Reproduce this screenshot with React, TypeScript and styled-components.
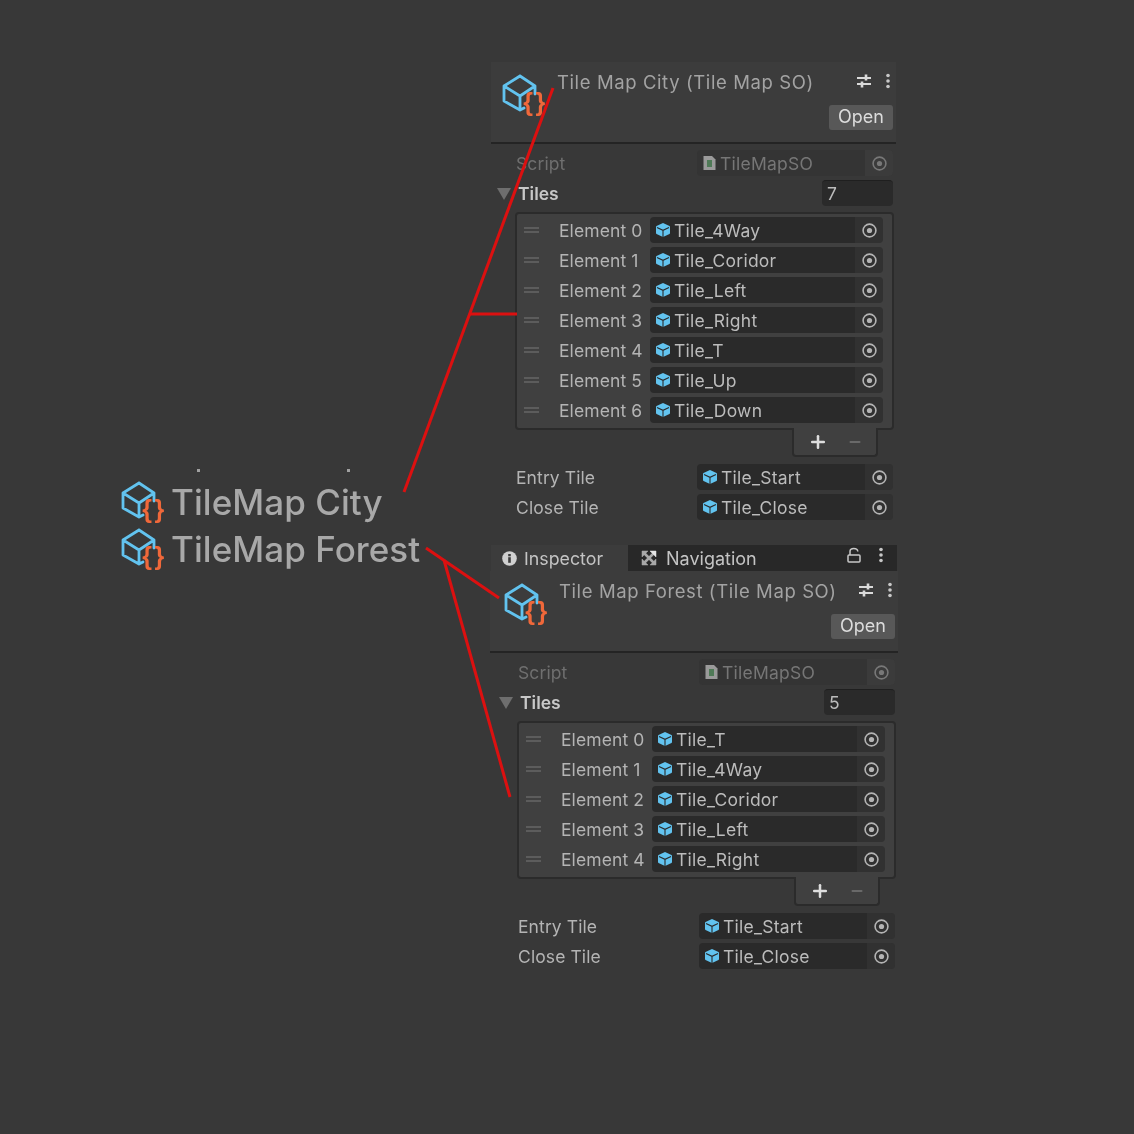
import React from 'react';
import styled, { createGlobalStyle } from 'styled-components';
import { Minus, Plus } from 'lucide-react';

const GlobalStyle = createGlobalStyle`
  html, body {
    margin: 0;
    padding: 0;
    background: #383838;
  }
  * {
    box-sizing: border-box;
  }
`;

function AssetIcon({ size = 46 }: { size?: number }) {
  return (
    <svg width={size} height={size} viewBox="0 0 46 46" fill="none">
      <path d="M19 4 L34 14 V22 M34 14 L19 24 L3 14 L19 4 M3 14 V29 L19 38 V24 M19 38 L23 36" stroke="#62c3ef" strokeWidth="2.8" strokeLinejoin="round" strokeLinecap="round" />
      <text x="34.5" y="39" textAnchor="middle" fontFamily="Liberation Sans, sans-serif" fontWeight="700" fontSize="25" fill="#f0683a" letterSpacing="2.5">{'{}'}</text>
    </svg>
  );
}

function PrefabIcon() {
  return (
    <svg width="16" height="16" viewBox="0 0 16 16">
      <path d="M8 1 L14.5 4 Q15 4.3 15 5 V11 Q15 11.7 14.5 12 L8 15 L1.5 12 Q1 11.7 1 11 V5 Q1 4.3 1.5 4 Z" fill="#62c3ef" />
      <path d="M2 5.5 L8 8.3 L14 5.5 M8 8.3 V15" stroke="#2a2a2a" strokeWidth="1.1" fill="none" />
    </svg>
  );
}

function ScriptIcon() {
  return (
    <svg width="15" height="16" viewBox="0 0 15 16">
      <path d="M1.5 1 H10 L13.5 4.5 V15 H1.5 Z" fill="#9a9a9a" />
      <rect x="5" y="5" width="5" height="7" fill="#4f7a57" />
    </svg>
  );
}

function TargetIcon({ dim }: { dim?: boolean }) {
  const c = dim ? '#787878' : '#b4b4b4';
  return (
    <svg width="17" height="17" viewBox="0 0 17 17" fill="none">
      <circle cx="8.5" cy="8.5" r="6.4" stroke={c} strokeWidth="1.6" />
      <circle cx="8.5" cy="8.5" r="2.6" fill={c} />
    </svg>
  );
}

function SlidersIcon() {
  return (
    <svg width="16" height="16" viewBox="0 0 16 16" fill="none" stroke="#dadada" strokeWidth="1.8">
      <path d="M1 5 H15 M1 11 H15" />
      <path d="M10 1.5 V7.5 M6 8.5 V14.5" strokeWidth="2.6" />
    </svg>
  );
}

function KebabIcon() {
  return (
    <svg width="6" height="16" viewBox="0 0 6 16" fill="#c8c8c8">
      <circle cx="3" cy="2.5" r="1.8" />
      <circle cx="3" cy="8" r="1.8" />
      <circle cx="3" cy="13.5" r="1.8" />
    </svg>
  );
}

function InfoIcon() {
  return (
    <svg width="15" height="15" viewBox="0 0 15 15">
      <circle cx="7.5" cy="7.5" r="7.3" fill="#d0d0d0" />
      <rect x="6.2" y="6.2" width="2.6" height="5.6" fill="#3c3c3c" />
      <rect x="6.2" y="3" width="2.6" height="2.3" fill="#3c3c3c" />
    </svg>
  );
}

function NavIcon() {
  return (
    <svg width="16" height="16" viewBox="0 0 16 16" fill="none" stroke="#a8a8a8">
      <path d="M2 2 L14 14 M14 2 L2 14" strokeWidth="2.6" />
      <path d="M1 1 H7 L1 7 Z M1 15 H7 L1 9 Z M15 15 H9 L15 9 Z" fill="#a8a8a8" strokeWidth="0.5" />
      <path d="M15 1 H9 L15 7 Z" fill="#e4e4e4" stroke="#e4e4e4" strokeWidth="0.5" />
    </svg>
  );
}

function LockIcon() {
  return (
    <svg width="14" height="16" viewBox="0 0 14 16" fill="none" stroke="#c8c8c8" strokeWidth="1.5">
      <rect x="1" y="8" width="12" height="7" rx="1" />
      <path d="M3 8 V4.5 C3 0.5 10.5 0.5 10.8 4.5" />
    </svg>
  );
}

const Page = styled.div`
  position: relative;
  width: 1134px;
  height: 1134px;
  display: grid;
  grid-template-columns: 491px 1fr;
  background: #383838;
  font-family: Inter, 'Liberation Sans', sans-serif;
  filter: blur(0.7px);
  overflow: hidden;
`;

const AssetColumn = styled.div`
  padding: 469px 0 0 120px;
  filter: blur(0.7px);
`;

const StrayMarks = styled.div`
  display: flex;
  gap: 147px;
  height: 9px;
  padding-left: 77px;
`;

const StrayMark = styled.span`
  width: 3px;
  height: 3px;
  background: #a0a0a0;
`;

const AssetRow = styled.div`
  display: flex;
  align-items: center;
  height: 47px;
  gap: 5px;
  color: #a8a8a8;
  font-size: 35px;
  font-weight: 500;
  letter-spacing: 0.05px;
`;

const InspectorColumn = styled.div`
  padding-top: 62px;
`;

const Panel = styled.section<{ $shift?: boolean }>`
  width: 405px;
  margin-left: ${(p) => (p.$shift ? '2px' : '0')};
`;

const TabStrip = styled.div`
  display: flex;
  height: 26px;
  width: 406px;
  margin-top: 23px;
`;

const ActiveTab = styled.div`
  width: 137px;
  display: flex;
  align-items: center;
  gap: 7px;
  padding-left: 11px;
  background: #3c3c3c;
  color: #c4c4c4;
  font-size: 17.8px;
`;

const IdleTabs = styled.div`
  flex: 1;
  display: flex;
  align-items: center;
  gap: 9px;
  padding: 0 13px;
  background: #282828;
  color: #c4c4c4;
  font-size: 18px;
`;

const TabActions = styled.div`
  margin-left: auto;
  display: flex;
  align-items: center;
  gap: 17px;
  padding-bottom: 6px;
`;

const Header = styled.header<{ $bleed?: boolean }>`
  position: relative;
  height: 82px;
  display: flex;
  margin-left: ${(p) => (p.$bleed ? '-3px' : '0')};
  padding: 10px 0 0 ${(p) => (p.$bleed ? '13px' : '10px')};
  background: #3c3c3c;
  border-bottom: 2px solid #242424;
`;

const Title = styled.div`
  margin-left: 10px;
  color: #a3a3a3;
  font-size: 18.5px;
  letter-spacing: 0.6px;
  line-height: 20px;
  white-space: nowrap;
  flex: 1;
`;

const HeaderActions = styled.div`
  display: flex;
  align-items: flex-start;
  gap: 13px;
  padding-right: 5px;
  padding-top: 1px;
`;

const OpenButton = styled.button`
  position: absolute;
  right: 3px;
  top: 43px;
  width: 64px;
  height: 25px;
  padding: 0 0 2px;
  border: 0;
  border-radius: 3px;
  background: #585858;
  color: #dcdcdc;
  font: 400 18px Inter, sans-serif;
`;

const Body = styled.div`
  padding: 4px 3px 0 25px;
`;

const PropertyRow = styled.div`
  display: flex;
  align-items: center;
  justify-content: space-between;
  height: 30px;
`;

const Label = styled.span<{ $dim?: boolean }>`
  color: ${(p) => (p.$dim ? '#6f6f6f' : '#b4b4b4')};
  font-size: 17.5px;
  letter-spacing: 0.1px;
`;

const FoldLabel = styled.span`
  position: relative;
  color: #c8c8c8;
  font-size: 17.5px;
  font-weight: 600;
  margin-left: 2px;

  &::before {
    content: '';
    position: absolute;
    left: -21px;
    top: 5px;
    border-left: 7px solid transparent;
    border-right: 7px solid transparent;
    border-top: 12px solid #6e6e6e;
  }
`;

const ObjectField = styled.div<{ $wide?: boolean; $dim?: boolean }>`
  width: ${(p) => (p.$wide ? '233px' : '196px')};
  height: 26px;
  flex: none;
  display: flex;
  align-items: center;
  gap: 3px;
  padding-left: 5px;
  border-radius: 4px;
  background: ${(p) => (p.$dim ? '#343434' : '#2a2a2a')};
  color: ${(p) => (p.$dim ? '#767676' : '#bcbcbc')};
  font-size: 17.5px;
  letter-spacing: 0.25px;
`;

const Selector = styled.span`
  margin-left: auto;
  width: 28px;
  height: 100%;
  display: flex;
  align-items: center;
  justify-content: center;
  border-radius: 0 4px 4px 0;
  background: rgba(255, 255, 255, 0.035);
`;

const IntField = styled.div`
  width: 71px;
  height: 26px;
  padding-left: 5px;
  border-radius: 4px;
  background: #2a2a2a;
  border-top: 1px solid #1f1f1f;
  color: #bcbcbc;
  font-size: 17.5px;
  line-height: 25px;
`;

const ListBox = styled.div`
  margin: 4px -1px 0 -1px;
  padding: 1px 8px 3px 7px;
  border: 2px solid #2b2b2b;
  border-radius: 4px;
  background: #404040;
`;

const ElementRow = styled.div`
  display: flex;
  align-items: center;
  height: 30px;
`;

const DragHandle = styled.span`
  width: 15px;
  height: 6px;
  border-top: 2px solid #5c5c5c;
  border-bottom: 2px solid #5c5c5c;
  flex: none;
`;

const ElementLabel = styled.span`
  margin-left: 20px;
  width: 91px;
  flex: none;
  color: #b4b4b4;
  font-size: 17.5px;
  letter-spacing: 0.1px;
`;

const Footer = styled.div`
  display: flex;
  align-items: center;
  justify-content: center;
  gap: 19px;
  width: 86px;
  height: 29px;
  margin: -2px 15px 5px auto;
  border: 2px solid #2b2b2b;
  border-top: 0;
  border-radius: 0 0 4px 4px;
  background: #404040;
`;

const AnnotationLayer = styled.svg`
  position: absolute;
  inset: 0;
  pointer-events: none;
`;

type InspectorProps = {
  title: string;
  tiles: string[];
  shift?: boolean;
};

function ObjectValue({ name, wide }: { name: string; wide?: boolean }) {
  return (
    <ObjectField $wide={wide}>
      <PrefabIcon />
      {name}
      <Selector>
        <TargetIcon />
      </Selector>
    </ObjectField>
  );
}

function Inspector({ title, tiles, shift }: InspectorProps) {
  return (
    <Panel $shift={shift}>
      <Header $bleed={shift}>
        <AssetIcon />
        <Title>{title}</Title>
        <HeaderActions>
          <SlidersIcon />
          <KebabIcon />
        </HeaderActions>
        <OpenButton>Open</OpenButton>
      </Header>
      <Body>
        <PropertyRow>
          <Label $dim>Script</Label>
          <ObjectField $dim>
            <ScriptIcon />
            TileMapSO
            <Selector>
              <TargetIcon dim />
            </Selector>
          </ObjectField>
        </PropertyRow>
        <PropertyRow>
          <FoldLabel>Tiles</FoldLabel>
          <IntField>{tiles.length}</IntField>
        </PropertyRow>
        <ListBox>
          {tiles.map((tile, i) => (
            <ElementRow key={tile}>
              <DragHandle />
              <ElementLabel>Element {i}</ElementLabel>
              <ObjectValue name={tile} wide />
            </ElementRow>
          ))}
        </ListBox>
        <Footer>
          <Plus size={20} strokeWidth={3} color="#dedede" />
          <Minus size={16} strokeWidth={2.5} color="#777777" />
        </Footer>
        <PropertyRow>
          <Label>Entry Tile</Label>
          <ObjectValue name="Tile_Start" />
        </PropertyRow>
        <PropertyRow>
          <Label>Close Tile</Label>
          <ObjectValue name="Tile_Close" />
        </PropertyRow>
      </Body>
    </Panel>
  );
}

export default function App() {
  return (
    <Page>
      <GlobalStyle />
      <AssetColumn>
        <StrayMarks>
          <StrayMark />
          <StrayMark />
        </StrayMarks>
        <AssetRow>
          <AssetIcon />
          TileMap City
        </AssetRow>
        <AssetRow>
          <AssetIcon />
          TileMap Forest
        </AssetRow>
      </AssetColumn>
      <InspectorColumn>
        <Inspector
          title="Tile Map City (Tile Map SO)"
          tiles={['Tile_4Way', 'Tile_Coridor', 'Tile_Left', 'Tile_Right', 'Tile_T', 'Tile_Up', 'Tile_Down']}
        />
        <TabStrip>
          <ActiveTab>
            <InfoIcon />
            Inspector
          </ActiveTab>
          <IdleTabs>
            <NavIcon />
            Navigation
            <TabActions>
              <LockIcon />
              <KebabIcon />
            </TabActions>
          </IdleTabs>
        </TabStrip>
        <Inspector
          shift
          title="Tile Map Forest (Tile Map SO)"
          tiles={['Tile_T', 'Tile_4Way', 'Tile_Coridor', 'Tile_Left', 'Tile_Right']}
        />
      </InspectorColumn>
      <AnnotationLayer width="1134" height="1134" viewBox="0 0 1134 1134">
        <g stroke="#dc1010" strokeWidth="3" fill="none">
          <path d="M404 492 L553 88" />
          <path d="M470 314 H517" />
          <path d="M426 548 L499 598" />
          <path d="M444 560 L510 797" />
        </g>
      </AnnotationLayer>
    </Page>
  );
}
